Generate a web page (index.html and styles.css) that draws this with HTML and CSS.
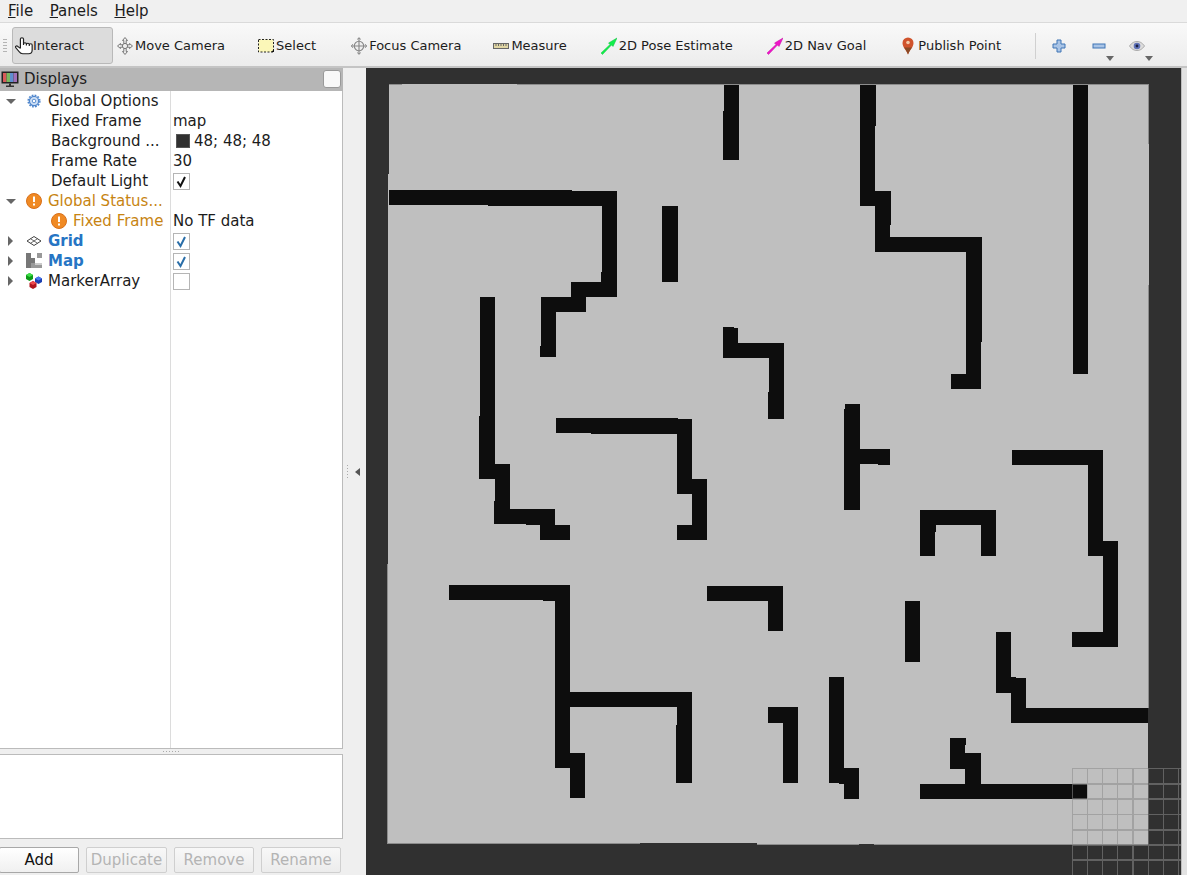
FILE: index.html
```html
<!DOCTYPE html>
<html>
<head>
	<title>RViz</title>
	<link rel="stylesheet" href="styles.css">
</head>
<body>
	<nav class="menubar">
		<span><u>F</u>ile</span>
		<span><u>P</u>anels</span>
		<span><u>H</u>elp</span>
	</nav>

	<div class="toolbar">
		<div class="grip"></div>
		<div class="tool active">
			<svg width="18" height="18" viewBox="0.5 0 15 18" preserveAspectRatio="none" fill="none" stroke="#222" stroke-width="1">
				<path d="M5 2h2.600v5h7.200v6c0 2.500-1 3.700-3 3.700H7l-6-6 4 0z" fill="#fff" stroke="none"/>
				<path d="M5 11.500V2a1.300 1.300 0 0 1 2.600 0V8M7.600 7a1.200 1.200 0 0 1 2.400 0v1.500M10 7.500a1.200 1.200 0 0 1 2.400 0v1.500M12.400 8a1.200 1.200 0 0 1 2.400 0v5c0 2.500-1 3.700-3 3.700H7c-1.500 0-2.300-.8-3-2L1 10.500c-.6-1.200.8-2.200 1.800-1.200L5 11.500"/>
			</svg>
			<span>Interact</span>
		</div>
		<div class="tool tool-move">
			<svg width="16" height="18" viewBox="0 0 16 18" fill="#eee" stroke="#777" stroke-width="1"><path d="M8 .5l2.500 3H9.200v3h-2.400v-3H5.500zM8 17.500l2.500-3H9.200v-3h-2.400v3H5.500zM.5 9l3-2.500v1.300h3v2.400h-3v1.300zM15.500 9l-3-2.500v1.300h-3v2.400h3v1.300z"/><circle cx="8" cy="9" r="2.600"/></svg>
			<span>Move Camera</span>
		</div>
		<div class="tool tool-select">
			<svg width="16" height="18" viewBox="0 0 16 18"><rect x=".5" y="2.500" width="15" height="12.500" fill="#fbf7b8" stroke="#222" stroke-dasharray="2 1.500"/><path d="M13 15h3v-2.500z" fill="#111"/></svg>
			<span>Select</span>
		</div>
		<div class="tool tool-focus">
			<svg width="16" height="18" viewBox="0 0 17 18" fill="none" stroke="#888" stroke-width="1.200"><circle cx="8.500" cy="9" r="5" fill="#eee"/><path d="M8.500 0v18M0 9h17"/><path d="M6.500 2L8.500 .5 10.500 2M6.500 16l2 1.500 2-1.500M2 7L.5 9 2 11M15 7l1.500 2L15 11" stroke-width="1"/></svg>
			<span>Focus Camera</span>
		</div>
		<div class="tool">
			<svg width="16" height="18" viewBox="0 0 16 18"><rect x=".5" y="6.500" width="15" height="5" fill="#e0d6a4" stroke="#666"/><path d="M3 7v2M5.500 7v2M8 7v2M10.500 7v2M13 7v2" stroke="#666"/></svg>
			<span>Measure</span>
		</div>
		<div class="tool">
			<svg width="16" height="18" viewBox="0 0 16 18"><path d="M0 16L9 7.500 7.500 6 16 1l-4 8.500L10.500 8 1.500 17.500z" fill="#12ef4a" stroke="#10c040" stroke-width=".5"/></svg>
			<span>2D Pose Estimate</span>
		</div>
		<div class="tool tool-nav">
			<svg width="16" height="18" viewBox="0 0 16 18"><path d="M0 16L9 7.500 7.500 6 16 1l-4 8.500L10.500 8 1.500 17.500z" fill="#f015c8" stroke="#c010a0" stroke-width=".5"/></svg>
			<span>2D Nav Goal</span>
		</div>
		<div class="tool pin">
			<svg width="14" height="18" viewBox="0 0 14 18"><path d="M7 17.500C5.500 13 1.500 10.500 1.500 6a5.500 5.500 0 0 1 11 0C12.500 10.500 8.500 13 7 17.500z" fill="#d0532c"/><path d="M7 17.500C6 14.500 4.500 12.500 3 10.500h8C9.500 12.500 8 14.500 7 17.500z" fill="#8a4a26"/><circle cx="7" cy="5.500" r="1.800" fill="#f2c9a8"/></svg>
			<span>Publish Point</span>
		</div>
		<div class="tool-sep"></div>
		<div class="view-tools">
			<svg class="plus" width="14" height="14" viewBox="0 0 14 14"><path d="M5 1h4v4h4v4H9v4H5V9H1V5h4z" fill="#a9c4e6" stroke="#3f74b5"/></svg>
			<div class="view-drop minus">
				<svg width="14" height="14" viewBox="0 0 14 14"><rect x="1" y="5" width="12" height="4" fill="#a9c4e6" stroke="#3f74b5"/></svg>
				<i class="drop"></i>
			</div>
			<div class="view-drop eye">
				<svg width="16" height="14" viewBox="0 0 16 14"><path d="M.5 7C3 3.500 5.500 2.500 8 2.500s5 1 7.500 4.500C13 10.500 10.500 11.500 8 11.500S3 10.500.5 7z" fill="#dcdcdc" stroke="#aaa"/><circle cx="8" cy="7" r="3.300" fill="#5f72b8"/><circle cx="8" cy="7" r="1.400" fill="#1a1f40"/></svg>
				<i class="drop"></i>
			</div>
		</div>
	</div>

	<main class="main">
		<section class="dock">
			<header class="dock-title">
				<svg width="18" height="18" viewBox="0 0 18 18">
					<rect x=".5" y="1.500" width="17" height="12" fill="#222"/>
					<rect x="2" y="3" width="3.500" height="9" fill="#d85a5a"/>
					<rect x="5.500" y="3" width="3.500" height="9" fill="#79b85f"/>
					<rect x="9" y="3" width="3.500" height="9" fill="#5f8fd0"/>
					<rect x="12.500" y="3" width="3.500" height="9" fill="#a070b8"/>
					<path d="M8 13.500h2v2h3v1.500H5v-1.500h3z" fill="#333"/>
				</svg>
				<span class="dock-name">Displays</span>
				<span class="float-btn"></span>
			</header>

			<div class="tree">
				<div class="row">
					<div class="name"><i class="arrow down"></i>
						<svg class="row-icon" width="16" height="16" viewBox="-1 -1 18 18"><circle cx="8" cy="8" r="5.200" fill="#cfe0f5" stroke="#4f86cc" stroke-width="1.400"/><circle cx="8" cy="8" r="6.600" fill="none" stroke="#4f86cc" stroke-width="1.600" stroke-dasharray="2 1.450"/><circle cx="8" cy="8" r="2" fill="#fff" stroke="#4f86cc"/></svg>
						<span>Global Options</span></div>
					<div class="value"></div>
				</div>
				<div class="row"><div class="name sub">Fixed Frame</div><div class="value">map</div></div>
				<div class="row"><div class="name sub">Background ...</div><div class="value"><i class="swatch"></i>48; 48; 48</div></div>
				<div class="row"><div class="name sub">Frame Rate</div><div class="value">30</div></div>
				<div class="row"><div class="name sub">Default Light</div><div class="value">
					<span class="check"><svg width="15" height="15" viewBox="0 0 15 15"><path d="M3.500 7.500l3 4.500 4.500-9" fill="none" stroke="#111" stroke-width="2"/></svg></span>
				</div></div>
				<div class="row">
					<div class="name warn"><i class="arrow down"></i>
						<svg class="row-icon" width="16" height="16" viewBox="0 0 16 16"><circle cx="8" cy="8" r="7.500" fill="#f08a24" stroke="#d8701a"/><rect x="7" y="3.500" width="2" height="5.500" fill="#fff"/><rect x="7" y="10.500" width="2" height="2" fill="#fff"/></svg>
						<span>Global Status...</span></div>
					<div class="value"></div>
				</div>
				<div class="row">
					<div class="name warn child">
						<svg class="row-icon" width="16" height="16" viewBox="0 0 16 16"><circle cx="8" cy="8" r="7.500" fill="#f08a24" stroke="#d8701a"/><rect x="7" y="3.500" width="2" height="5.500" fill="#fff"/><rect x="7" y="10.500" width="2" height="2" fill="#fff"/></svg>
						<span>Fixed Frame</span></div>
					<div class="value">No TF data</div>
				</div>
				<div class="row">
					<div class="name on"><i class="arrow right"></i>
						<svg class="row-icon" width="16" height="16" viewBox="0 0 16 16" fill="none" stroke="#444"><path d="M8 3.500L15 8 8 12.500 1 8z"/><path d="M4.500 5.700L11.500 10.300M11.500 5.700L4.500 10.300" stroke-width=".8"/></svg>
						<span>Grid</span></div>
					<div class="value"><span class="check"><svg width="15" height="15" viewBox="0 0 15 15"><path d="M3.500 7.500l3 4.500 4.500-9" fill="none" stroke="#2a6ea8" stroke-width="2"/></svg></span></div>
				</div>
				<div class="row">
					<div class="name on"><i class="arrow right"></i>
						<svg class="row-icon" width="16" height="16" viewBox="0 0 16 16"><path d="M0 0h5v5H0zM0 5h5v5H0zM0 10h5v5H0zM5 5h4v5H5z" fill="#777"/><path d="M11 0h5v5h-5zM5 10h11v5H5z" fill="#999"/><path d="M9 10h7v2H9z" fill="#ccc"/></svg>
						<span>Map</span></div>
					<div class="value"><span class="check"><svg width="15" height="15" viewBox="0 0 15 15"><path d="M3.500 7.500l3 4.500 4.500-9" fill="none" stroke="#2a6ea8" stroke-width="2"/></svg></span></div>
				</div>
				<div class="row">
					<div class="name"><i class="arrow right"></i>
						<svg class="row-icon" width="16" height="16" viewBox="0 0 16 16">
							<path d="M3.500 0L7 2v4L3.500 8 0 6V2z" fill="#0e9a18"/><path d="M3.500 0L7 2 3.500 4 0 2z" fill="#3ee048"/>
							<path d="M12.500 3.500L16 5.500v3.500l-3.500 2L9 9V5.500z" fill="#1c3fb0"/><path d="M12.500 3.500L16 5.500 12.500 7.500 9 5.500z" fill="#4a78f0"/>
							<path d="M7 8l3.500 2v4L7 16l-3.500-2v-4z" fill="#b0141e"/><path d="M7 8l3.500 2L7 12l-3.500-2z" fill="#ee4a50"/>
						</svg>
						<span>MarkerArray</span></div>
					<div class="value"><span class="check"></span></div>
				</div>
				<div class="row fill"><div class="name"></div><div class="value"></div></div>
			</div>

			<div class="h-handle"><i></i></div>
			<div class="help-box"></div>

			<div class="dock-buttons">
				<button class="add">Add</button>
				<button class="dup" disabled>Duplicate</button>
				<button disabled>Remove</button>
				<button disabled>Rename</button>
			</div>
		</section>

		<div class="v-handle">
			<i class="dots"></i>
			<i class="collapse"></i>
		</div>

		<div class="view">
			<svg class="map" width="815" height="807" viewBox="366 68 815 807">
				<rect x="366" y="68" width="815" height="807" fill="#303030"/>

				<!-- free space of the occupancy grid, a little skewed -->
				<path fill="#bfbfbf" d="M389 84H517V85H1149V285H1148V844H757V843H387V564H388V174H389z"/>
				<g stroke="#8c8c8c" fill="none">
					<path d="M389 84.500H402M517 84.500H1149M1148.500 85V144"/>
					<path d="M387.500 564V843.500H640"/>
					<path d="M757 844.500H1148M1148.500 285V708"/>
				</g>
				<rect x="859" y="844" width="15" height="1" fill="#303030"/>

				<g fill="#0d0d0d">
					<rect x="724" y="85" width="15" height="26"/>
					<rect x="723" y="111" width="16" height="49"/>

					<rect x="860" y="85" width="16" height="41"/>
					<rect x="860" y="126" width="15" height="80"/>
					<rect x="875" y="191" width="16" height="34"/>
					<rect x="875" y="225" width="15" height="27"/>
					<rect x="875" y="237" width="107" height="15"/>
					<rect x="966" y="237" width="16" height="105"/>
					<rect x="966" y="342" width="15" height="47"/>
					<rect x="951" y="374" width="30" height="15"/>

					<rect x="1073" y="85" width="15" height="289"/>

					<rect x="389" y="190" width="183" height="15"/>
					<rect x="488" y="191" width="129" height="15"/>
					<rect x="602" y="191" width="15" height="81"/>
					<rect x="601" y="272" width="16" height="25"/>
					<rect x="571" y="282" width="46" height="15"/>
					<rect x="541" y="297" width="45" height="15"/>
					<rect x="541" y="297" width="15" height="49"/>
					<rect x="540" y="346" width="16" height="11"/>

					<rect x="662" y="206" width="16" height="76"/>

					<rect x="480" y="297" width="15" height="119"/>
					<rect x="479" y="416" width="16" height="63"/>
					<rect x="479" y="464" width="31" height="15"/>
					<rect x="495" y="464" width="15" height="37"/>
					<rect x="494" y="501" width="16" height="23"/>
					<rect x="494" y="509" width="61" height="15"/>
					<rect x="526" y="509" width="29" height="16"/>
					<rect x="540" y="525" width="30" height="15"/>

					<rect x="723" y="327" width="11" height="31"/>
					<rect x="723" y="328" width="15" height="30"/>
					<rect x="723" y="343" width="61" height="15"/>
					<rect x="769" y="343" width="15" height="49"/>
					<rect x="768" y="392" width="16" height="27"/>

					<rect x="556" y="418" width="122" height="15"/>
					<rect x="591" y="418" width="87" height="16"/>
					<rect x="677" y="419" width="15" height="75"/>
					<rect x="677" y="479" width="30" height="15"/>
					<rect x="692" y="479" width="15" height="61"/>
					<rect x="677" y="525" width="30" height="15"/>

					<rect x="845" y="404" width="15" height="5"/>
					<rect x="844" y="409" width="16" height="101"/>
					<rect x="860" y="449" width="30" height="15"/>
					<rect x="878" y="449" width="12" height="16"/>

					<rect x="1012" y="450" width="91" height="15"/>
					<rect x="1088" y="450" width="15" height="106"/>
					<rect x="1088" y="541" width="30" height="15"/>
					<rect x="1103" y="541" width="15" height="106"/>
					<rect x="1072" y="632" width="46" height="15"/>

					<rect x="920" y="510" width="76" height="15"/>
					<rect x="920" y="510" width="15" height="46"/>
					<rect x="935" y="525" width="1" height="7"/>
					<rect x="981" y="510" width="15" height="46"/>

					<rect x="449" y="585" width="121" height="15"/>
					<rect x="543" y="585" width="27" height="16"/>
					<rect x="555" y="585" width="15" height="183"/>
					<rect x="555" y="692" width="137" height="15"/>
					<rect x="677" y="692" width="15" height="33"/>
					<rect x="676" y="725" width="16" height="58"/>
					<rect x="555" y="753" width="30" height="15"/>
					<rect x="570" y="753" width="15" height="45"/>

					<rect x="707" y="586" width="76" height="15"/>
					<rect x="768" y="586" width="15" height="45"/>

					<rect x="905" y="601" width="15" height="61"/>

					<rect x="996" y="632" width="15" height="61"/>
					<rect x="996" y="677" width="20" height="16"/>
					<rect x="1011" y="678" width="15" height="45"/>
					<rect x="1011" y="708" width="137" height="15"/>

					<rect x="768" y="707" width="30" height="16"/>
					<rect x="783" y="707" width="15" height="76"/>

					<rect x="829" y="677" width="15" height="106"/>
					<rect x="839" y="768" width="20" height="16"/>
					<rect x="844" y="768" width="15" height="31"/>

					<rect x="950" y="738" width="16" height="7"/>
					<rect x="950" y="745" width="15" height="24"/>
					<rect x="950" y="753" width="31" height="16"/>
					<rect x="965" y="753" width="16" height="31"/>
					<rect x="920" y="784" width="167" height="15"/>
				</g>

				<!-- grid display, seen through the floor in the corner -->
				<path stroke="#8a8a8a" stroke-opacity=".55" stroke-width="1.300" fill="none" d="M1072.500 768V875M1087.500 768V875M1102.700 768V875M1117.700 768V875M1133 768V875M1148.200 768V875M1163.300 768V875M1178.500 768V875M1072 768.500H1181M1072 784H1181M1072 799H1181M1072 814.500H1181M1072 830H1181M1072 845H1181M1072 860H1181"/>
			</svg>
		</div>

		<div class="right-strip"></div>
	</main>
</body>
</html>
```

FILE: styles.css
```css
/* General styles */
html, body {
	height: 100%;
}

body {
	font-family: "DejaVu Sans", sans-serif;
	font-size: 15px;
	color: #1c1c1c;
	margin: 0;
	padding: 0;
	overflow: hidden;
	display: flex;
	flex-direction: column;
	background-color: #efefef;
}

/* Menu bar */
.menubar {
	height: 23px;
	box-sizing: border-box;
	flex: none;
	display: flex;
	align-items: center;
	gap: 16.5px;
	padding: 0 0 1px 8px;
	background-color: #f0f0f0;
	border-bottom: 1px solid #dadada;
}

/* Toolbar */
.toolbar {
	height: 45px;
	box-sizing: border-box;
	flex: none;
	display: flex;
	align-items: center;
	padding-top: 2px;
	font-size: 13px;
	background: linear-gradient(#f9f9f9, #ececec);
	border-bottom: 2px solid #c4c4c4;
}

.grip {
	width: 4px;
	height: 16px;
	margin: 0 5px 0 3px;
	background: radial-gradient(circle, #b4b4b4 0.7px, transparent 1px) 0 0 / 2px 3px;
}

.tool {
	height: 37px;
	box-sizing: border-box;
	display: flex;
	align-items: center;
	gap: 2px;
	padding: 0 30px 0 4px;
	flex: none;
}

.tool.active {
	width: 101px;
	padding: 0 0 0 2px;
	gap: 0;
	background-color: #dcdcdc;
	border: 1px solid #b9b9b9;
	border-radius: 3px;
}

.tool-move {
	padding-right: 29px;
}

.tool-select,
.tool-nav {
	padding-right: 31px;
}

.tool-focus {
	padding-right: 28px;
}

.tool.pin {
	gap: 3px;
}

.tool-sep {
	width: 1px;
	height: 26px;
	margin: 0 0 0 4px;
	background-color: #d0d0d0;
}

.view-tools {
	display: flex;
	align-items: center;
	padding-left: 16px;
}

.view-drop {
	position: relative;
	display: flex;
}

.minus {
	margin-left: 26px;
}

.eye {
	margin-left: 23px;
}

.drop {
	position: absolute;
	top: 17px;
	right: -8px;
	border-left: 4.5px solid transparent;
	border-right: 4.5px solid transparent;
	border-top: 5px solid #666;
}

/* Main area */
.main {
	flex: 1;
	min-height: 0;
	display: flex;
}

.dock {
	width: 343px;
	flex: none;
	display: flex;
	flex-direction: column;
}

.dock-title {
	height: 23px;
	box-sizing: border-box;
	flex: none;
	display: flex;
	align-items: center;
	padding: 0 0 2px 1px;
	background-color: #b6b6b6;
}

.dock-name {
	margin-left: 5px;
	flex: 1;
}

.float-btn {
	width: 16px;
	height: 16px;
	margin-right: 2px;
	background-color: #f8f8f8;
	border: 1px solid #999;
	border-radius: 3px;
}

/* Property tree */
.tree {
	flex: 1;
	min-height: 0;
	display: flex;
	flex-direction: column;
	background-color: #fff;
	border-right: 1px solid #bbb;
	border-bottom: 1px solid #bbb;
}

.row {
	height: 20px;
	flex: none;
	display: flex;
	line-height: 20px;
}

.row.fill {
	flex: 1;
}

.name {
	width: 171px;
	flex: none;
	box-sizing: border-box;
	display: flex;
	align-items: center;
	white-space: nowrap;
	border-right: 1px solid #dcdcdc;
}

.name.sub,
.name.child {
	padding-left: 51px;
}

.name span {
	margin-left: 6px;
}

.name.warn {
	color: #c78412;
}

.name.on {
	color: #2675c4;
	font-weight: bold;
}

.row-icon {
	flex: none;
	margin-left: 26px;
}

.name.child .row-icon {
	margin-left: 0;
}

.arrow {
	width: 0;
	height: 0;
	flex: none;
}

.arrow.down {
	margin-left: 6px;
	margin-right: -16px;
	border-left: 5px solid transparent;
	border-right: 5px solid transparent;
	border-top: 5px solid #666;
}

.arrow.right {
	margin-left: 8px;
	margin-right: -13px;
	border-top: 5px solid transparent;
	border-bottom: 5px solid transparent;
	border-left: 5px solid #666;
}

.value {
	flex: 1;
	display: flex;
	align-items: center;
	padding-left: 2px;
	white-space: nowrap;
}

.swatch {
	width: 12px;
	height: 12px;
	margin: 0 4px 0 3px;
	background-color: #303030;
	border: 1px solid #555;
}

.check {
	width: 15px;
	height: 15px;
	background-color: #fff;
	border: 1px solid #b5b5b5;
	display: flex;
}

/* Lower part of the dock */
.h-handle {
	height: 5px;
	flex: none;
	display: flex;
	justify-content: center;
	align-items: center;
	padding-right: 1px;
}

.h-handle i {
	width: 16px;
	height: 1px;
	background: repeating-linear-gradient(90deg, #aaa 0 1px, transparent 1px 3px);
}

.help-box {
	height: 85px;
	flex: none;
	box-sizing: border-box;
	background-color: #fff;
	border-top: 1px solid #bbb;
	border-right: 1px solid #bbb;
	border-bottom: 1px solid #bbb;
}

.dock-buttons {
	height: 36px;
	box-sizing: border-box;
	flex: none;
	display: flex;
	align-items: center;
	gap: 7px;
	margin-left: -1px;
	padding-top: 6px;
}

button {
	height: 26px;
	width: 80px;
	padding: 0;
	font-family: "DejaVu Sans", sans-serif;
	font-size: 15px;
	color: #b4b4b4;
	background: linear-gradient(#f8f8f8, #ececec);
	border: 1px solid #cfcfcf;
	border-radius: 2px;
}

button.add {
	color: #111;
	background: linear-gradient(#fff, #f0f0f0);
	border-color: #a8a8a8;
}

button.dup {
	width: 81px;
}

/* Splitter and 3D view */
.v-handle {
	width: 23px;
	flex: none;
	display: flex;
	align-items: center;
	gap: 7px;
	padding-left: 4px;
	box-sizing: border-box;
}

.dots {
	width: 1px;
	height: 14px;
	background: repeating-linear-gradient(#aaa 0 1px, transparent 1px 3px);
}

.collapse {
	border-top: 4px solid transparent;
	border-bottom: 4px solid transparent;
	border-right: 5px solid #555;
}

.view {
	flex: 1;
	min-width: 0;
	display: flex;
	overflow: hidden;
}

.map {
	display: block;
	flex: none;
	shape-rendering: crispEdges;
}

.right-strip {
	width: 5px;
	flex: none;
	background-color: #e2e2e2;
	border-left: 1px solid #bdbdbd;
}
```
